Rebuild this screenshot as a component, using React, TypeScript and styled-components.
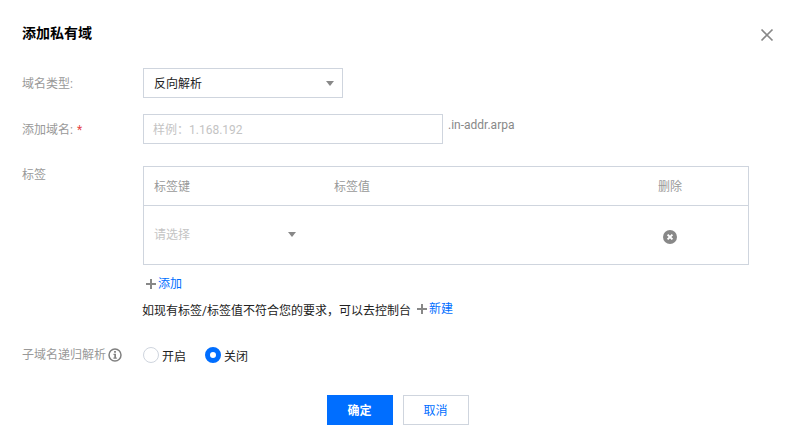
import React from "react";
import styled, { createGlobalStyle } from "styled-components";

const GlobalStyle = createGlobalStyle`
  html, body {
    margin: 0;
    padding: 0;
    background: #fff;
  }
  body {
    font-family: Roboto, "Liberation Sans", "Noto Sans CJK SC", sans-serif;
    font-size: 12px;
    color: #000;
  }
`;

const Dialog = styled.div`
  width: 790px;
  height: 447px;
  box-sizing: border-box;
  padding: 24px 41px 0 22px;
  overflow: hidden;
  position: relative;
`;
const Title = styled.h3`
  margin: 0 0 26px;
  height: 18px;
  font-size: 14px;
  line-height: 18px;
  font-weight: 700;
  color: #000;
`;
const CloseButton = styled.button`
  position: absolute;
  top: 28px;
  right: 16px;
  width: 14px;
  height: 14px;
  padding: 0;
  border: 0;
  background: none;
  display: flex;
`;
const FormRow = styled.div<{ $mb: number }>`
  display: flex;
  margin-bottom: ${(p) => p.$mb}px;
`;
const Label = styled.div<{ $top?: number }>`
  width: 121px;
  flex: none;
  padding-top: ${(p) => p.$top ?? 0}px;
  line-height: 16px;
  color: #999;
  display: flex;
  align-items: flex-start;
`;
const Required = styled.span`
  color: #e54545;
  margin-left: 4px;
`;
const Select = styled.div`
  width: 200px;
  height: 30px;
  box-sizing: border-box;
  border: 1px solid #cfd5de;
  padding: 0 8px 2px 10px;
  display: flex;
  align-items: center;
  justify-content: space-between;
  color: #222;
`;
const Caret = styled.i`
  display: block;
  width: 0;
  height: 0;
  margin-top: 2px;
  border-left: 4px solid transparent;
  border-right: 4px solid transparent;
  border-top: 5px solid #888;
`;
const Input = styled.div`
  width: 300px;
  height: 30px;
  box-sizing: border-box;
  border: 1px solid #cfd5de;
  padding: 0 9px 2px;
  display: flex;
  align-items: center;
  color: #c4c4c4;
`;
const Suffix = styled.span`
  margin-left: 5px;
  line-height: 22px;
  color: #888;
`;
const Field = styled.div`
  display: flex;
  flex-direction: column;
`;
const Table = styled.div`
  width: 606px;
  box-sizing: border-box;
  border: 1px solid #cfd5de;
`;
const HeadRow = styled.div`
  height: 39px;
  box-sizing: border-box;
  border-bottom: 1px solid #cfd5de;
  display: grid;
  grid-template-columns: 180px 324px 1fr;
  align-items: center;
  padding: 0 0 2px 10px;
  color: #999;
`;
const BodyRow = styled.div`
  height: 58px;
  display: grid;
  grid-template-columns: 180px 324px 1fr;
  align-items: center;
  padding-left: 10px;
`;
const Picker = styled.div`
  width: 142px;
  display: flex;
  align-items: center;
  justify-content: space-between;
  color: #c4c4c4;
  margin-top: -3px;
`;
const RemoveIcon = styled.svg`
  margin: 3px 0 0 5px;
  display: block;
`;
const AddRow = styled.div`
  display: flex;
  align-items: center;
  gap: 1px;
  margin: 11px 0 0 2px;
  height: 16px;
`;
const PlusIcon = styled.svg`
  display: block;
  flex: none;
`;
const BlueLink = styled.a`
  color: #006eff;
  line-height: 16px;
`;
const Note = styled.div`
  display: flex;
  align-items: center;
  height: 16px;
  margin: 9px 0 0 -1px;
  color: #222;
`;
const NotePlus = styled.span`
  display: flex;
  margin: 0 1px 0 5px;
`;
const InfoIcon = styled.svg`
  margin-left: 2px;
  margin-top: 1px;
  flex: none;
`;
const RadioGroup = styled.div`
  display: flex;
  align-items: center;
  height: 16px;
  gap: 19px;
`;
const RadioItem = styled.label`
  display: flex;
  align-items: center;
  gap: 3px;
  color: #222;
`;
const RadioDot = styled.i<{ $on?: boolean }>`
  display: block;
  width: 16px;
  height: 16px;
  box-sizing: border-box;
  border-radius: 50%;
  border: ${(p) => (p.$on ? "5px solid #006eff" : "1px solid #cfd5de")};
  background: #fff;
`;
const Footer = styled.div`
  display: flex;
  justify-content: center;
  gap: 10px;
  width: 751px;
`;
const Button = styled.button<{ $primary?: boolean }>`
  width: 66px;
  height: 30px;
  box-sizing: border-box;
  padding: 0 0 2px;
  font: inherit;
  font-weight: ${(p) => (p.$primary ? 700 : 400)};
  color: ${(p) => (p.$primary ? "#fff" : "#006eff")};
  background: ${(p) => (p.$primary ? "#006eff" : "#fff")};
  border: 1px solid ${(p) => (p.$primary ? "#006eff" : "#cfd5de")};
`;

const Plus = () => (
  <PlusIcon width="12" height="12" viewBox="0 0 12 12">
    <path d="M5 1h2v4h4v2H7v4H5V7H1V5h4z" fill="#888" />
  </PlusIcon>
);

function App() {
  return (
    <>
      <GlobalStyle />
      <Dialog>
        <Title>添加私有域</Title>
        <CloseButton aria-label="close">
          <svg width="14" height="14" viewBox="0 0 14 14">
            <path d="M1.5 1.5l11 11M12.5 1.5l-11 11" stroke="#888" strokeWidth="1.7" fill="none" />
          </svg>
        </CloseButton>

        <FormRow $mb={16}>
          <Label $top={8}>域名类型:</Label>
          <Select>
            反向解析
            <Caret />
          </Select>
        </FormRow>

        <FormRow $mb={22}>
          <Label $top={8}>
            添加域名:<Required>*</Required>
          </Label>
          <Input>样例：1.168.192</Input>
          <Suffix>.in-addr.arpa</Suffix>
        </FormRow>

        <FormRow $mb={30}>
          <Label $top={1}>标签</Label>
          <Field>
            <Table>
              <HeadRow>
                <span>标签键</span>
                <span>标签值</span>
                <span>删除</span>
              </HeadRow>
              <BodyRow>
                <Picker>
                  请选择
                  <Caret />
                </Picker>
                <span />
                <RemoveIcon width="14" height="14" viewBox="0 0 14 14">
                  <circle cx="7" cy="7" r="7" fill="#888" />
                  <path d="M4.6 4.6l4.8 4.8M9.4 4.6l-4.8 4.8" stroke="#fff" strokeWidth="2" />
                </RemoveIcon>
              </BodyRow>
            </Table>
            <AddRow>
              <Plus />
              <BlueLink>添加</BlueLink>
            </AddRow>
            <Note>
              如现有标签/标签值不符合您的要求，可以去控制台
              <NotePlus>
                <Plus />
              </NotePlus>
              <BlueLink>新建</BlueLink>
            </Note>
          </Field>
        </FormRow>

        <FormRow $mb={32}>
          <Label>
            子域名递归解析
            <InfoIcon width="14" height="14" viewBox="0 0 14 14">
              <circle cx="7" cy="7" r="6" fill="none" stroke="#808080" strokeWidth="1.5" />
              <path d="M6.1 3h1.8v1.7H6.1zM5.5 5.8h2.5v3.8h.8v1.2H5.4V9.6h.9V7h-.8z" fill="#808080" />
            </InfoIcon>
          </Label>
          <RadioGroup>
            <RadioItem>
              <RadioDot />
              开启
            </RadioItem>
            <RadioItem>
              <RadioDot $on />
              关闭
            </RadioItem>
          </RadioGroup>
        </FormRow>

        <Footer>
          <Button $primary>确定</Button>
          <Button>取消</Button>
        </Footer>
      </Dialog>
    </>
  );
}

export default App;
